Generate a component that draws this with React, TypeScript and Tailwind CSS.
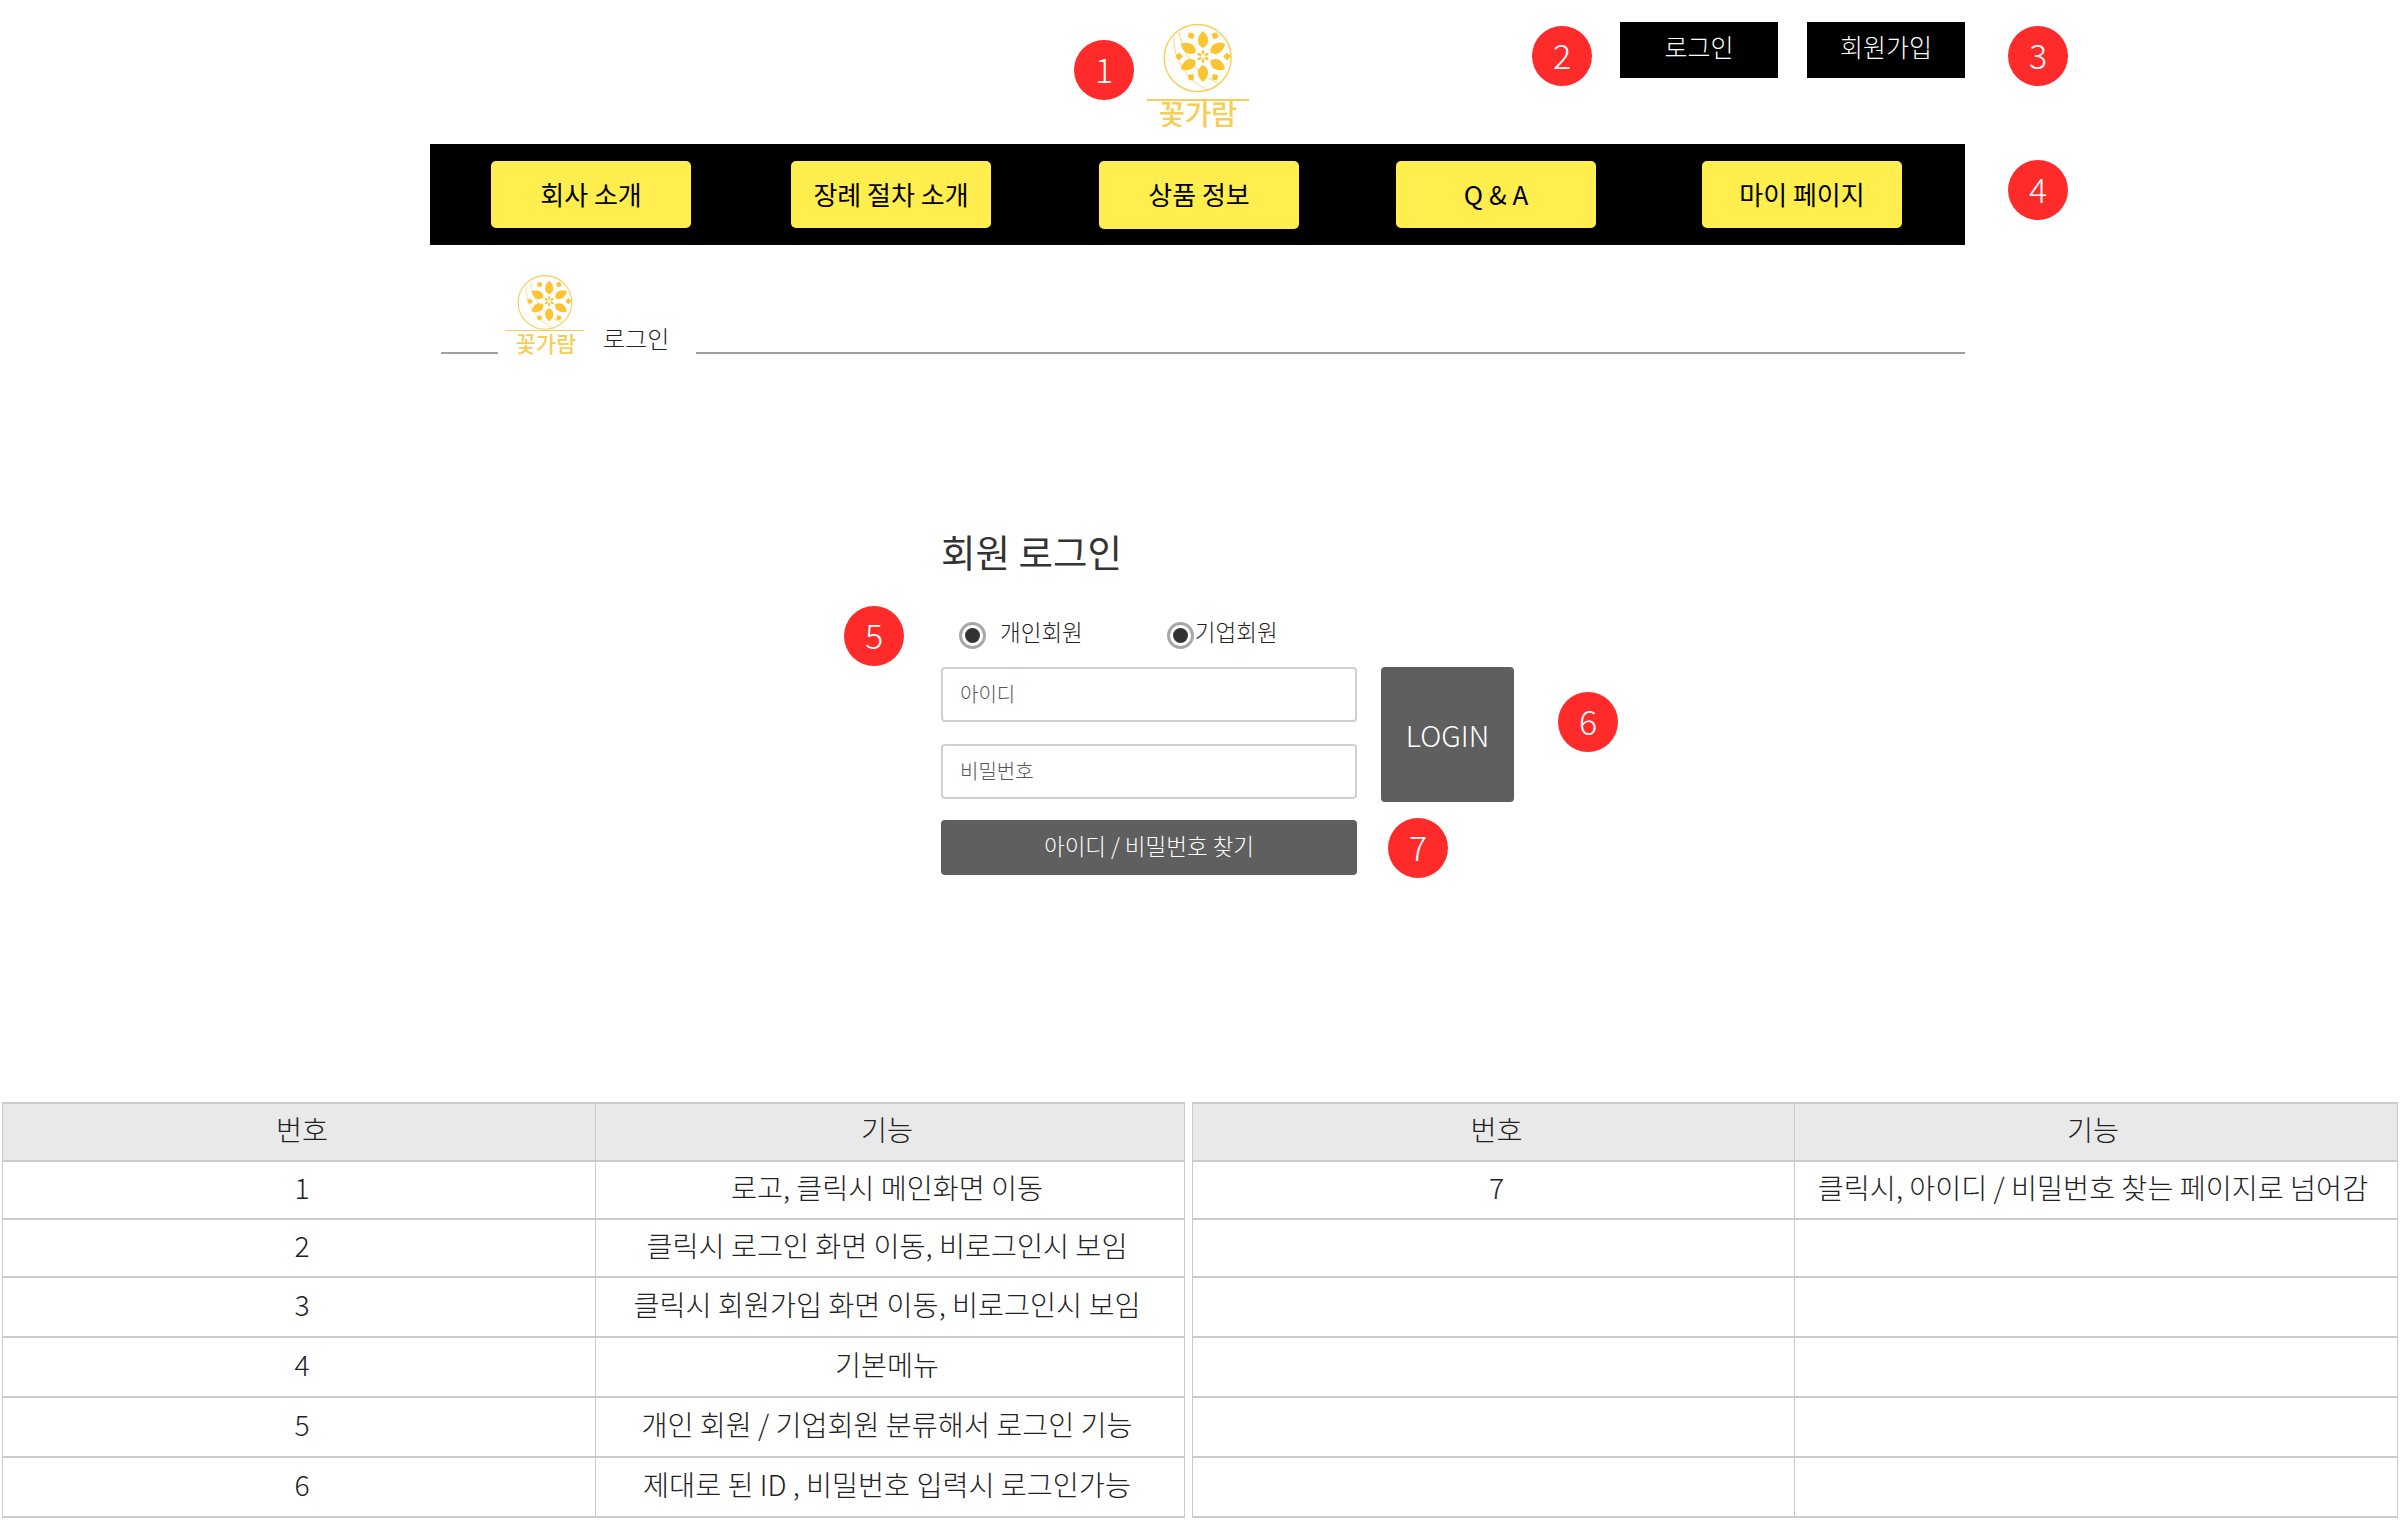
const menus = [
  { label: '회사 소개', className: 'ml-[61px] h-[67px]' },
  { label: '장례 절차 소개', className: 'ml-[100px] h-[67px]' },
  { label: '상품 정보', className: 'ml-[108px] h-[68px] mt-px' },
  { label: 'Q & A', className: 'ml-[97px] h-[67px]' },
  { label: '마이 페이지', className: 'ml-[106px] h-[67px]' },
];

const badges = [
  { n: 1, className: 'left-[1074px] top-[40px]' },
  { n: 2, className: 'left-[1532px] top-[26px]' },
  { n: 3, className: 'left-[2008px] top-[26px]' },
  { n: 4, className: 'left-[2008px] top-[160px]' },
  { n: 5, className: 'left-[844px] top-[606px]' },
  { n: 6, className: 'left-[1558px] top-[692px]' },
  { n: 7, className: 'left-[1388px] top-[818px]' },
];

const rowHeights = ['h-[58px]', 'h-[58px]', 'h-[58px]', 'h-[60px]', 'h-[60px]', 'h-[60px]', 'h-[60px]'];

const leftRows = [
  ['번호', '기능'],
  ['1', '로고, 클릭시 메인화면 이동'],
  ['2', '클릭시 로그인 화면 이동, 비로그인시 보임'],
  ['3', '클릭시 회원가입 화면 이동, 비로그인시 보임'],
  ['4', '기본메뉴'],
  ['5', '개인 회원 / 기업회원 분류해서 로그인 기능'],
  ['6', '제대로 된 ID , 비밀번호 입력시 로그인가능'],
];

const rightRows = [
  ['번호', '기능'],
  ['7', '클릭시, 아이디 / 비밀번호 찾는 페이지로 넘어감'],
  ['', ''],
  ['', ''],
  ['', ''],
  ['', ''],
  ['', ''],
];

function LogoMark({ className }: { className: string }) {
  const petals = [0, 60, 120, 180, 240, 300];
  return (
    <svg viewBox="0 0 90 80" className={className} fill="none">
      <circle cx="43.7" cy="43" r="33.5" stroke="#f5cf55" strokeWidth="1.4" />
      <path d="M20 22C19 46 34 66 54 75" stroke="#f5cf55" strokeWidth="0.8" />
      <path d="M25 17C29 42 44 60 66 69" stroke="#f5cf55" strokeWidth="0.8" />
      <g transform="translate(49 41.5)">
        {petals.map(a => (
          <g key={a} transform={`rotate(${a})`}>
            <path d="M0 -8.5C-7 -12 -6.5 -20 0 -25.5C6.5 -20 7 -12 0 -8.5Z" fill="#fbc531" />
            <ellipse cx="0" cy="-4.2" rx="1.4" ry="2.3" fill="#fbc531" />
            <g transform="rotate(30)">
              <rect x="-2.8" y="-26.8" width="5.6" height="5.6" rx="1" fill="#fbc531" transform="rotate(45 0 -24)" />
            </g>
          </g>
        ))}
      </g>
    </svg>
  );
}

function Radio({ className }: { className: string }) {
  return (
    <span className={`flex h-[27px] w-[27px] items-center justify-center rounded-full border-[3px] border-[#a8a8a8] bg-white ${className}`}>
      <span className="h-[15px] w-[15px] rounded-full bg-[#333333]" />
    </span>
  );
}

function SpecTable({ rows, className, firstCol }: { rows: string[][]; className: string; firstCol: string }) {
  return (
    <table className={`table-fixed border-collapse text-[28.3px] font-light text-[#222222] ${className}`}>
      <colgroup>
        <col className={firstCol} />
        <col />
      </colgroup>
      <tbody>
        {rows.map((row, i) => (
          <tr key={i} className={`${rowHeights[i]} ${i === 0 ? 'bg-[#e9e9e9]' : 'bg-white'}`}>
            <td className="whitespace-nowrap border-x border-y-2 border-[#cccccc] p-0 pb-[6px] pl-[6px] text-center align-middle">
              {row[0]}
            </td>
            <td className="whitespace-nowrap border-x border-y-2 border-[#cccccc] p-0 pb-[6px] pr-[6px] text-center align-middle">
              {row[1]}
            </td>
          </tr>
        ))}
      </tbody>
    </table>
  );
}

export default function App() {
  return (
    <div className="relative h-[1520px] w-[2400px] overflow-hidden bg-white font-['Noto_Sans_CJK_KR','Noto_Sans',sans-serif]">
      {/* Header */}
      <div className="ml-[430px] flex h-[144px] w-[1535px] items-start">
        <div className="ml-[717px] flex w-[102px] flex-col items-center pt-[15px]">
          <LogoMark className="ml-[2px] h-[80px] w-[90px]" />
          <div className="mt-[4px] h-[2px] w-full bg-[#f5cf55]" />
          <span className="-mt-[3px] text-[28.5px] font-medium leading-[30px] text-[#f5cf55]">꽃가람</span>
        </div>
        <div className="ml-auto flex gap-[29px] pt-[22px]">
          <button className="h-[56px] w-[158px] bg-black pb-[6px] text-[25px] font-light text-white">로그인</button>
          <button className="h-[56px] w-[158px] bg-black pb-[6px] text-[25px] font-light text-white">회원가입</button>
        </div>
      </div>

      {/* Menu bar */}
      <div className="ml-[430px] flex h-[101px] w-[1535px] items-center bg-black">
        {menus.map(m => (
          <button key={m.label} className={`w-[200px] rounded-[5px] bg-[#ffee4d] pb-[3px] text-[26px] text-black ${m.className}`}>
            {m.label}
          </button>
        ))}
      </div>

      {/* Breadcrumb */}
      <div className="ml-[441px] mt-[21px] flex h-[88px] w-[1524px] items-end">
        <div className="h-[2px] w-[57px] bg-[#a0a0a0]" />
        <div className="ml-[7px] flex w-[79px] flex-col items-center">
          <LogoMark className="ml-[3px] h-[64px] w-[72px] translate-y-[2px]" />
          <div className="h-px w-full bg-[#f5cf55]" />
          <span className="pl-[3px] text-[22px] font-medium leading-[23px] text-[#f5cf55]">꽃가람</span>
        </div>
        <span className="ml-[19px] pb-[2px] text-[24px] font-light leading-[28px] text-[#222222]">로그인</span>
        <div className="ml-[27px] h-[2px] flex-1 bg-[#a0a0a0]" />
      </div>

      {/* Login form */}
      <div className="ml-[941px] mt-[172px] w-[573px]">
        <h1 className="text-[37.5px] font-normal leading-[50px] text-[#333333]">회원 로그인</h1>
        <div className="mt-[45px] flex h-[28px] items-center text-[22.5px] font-light text-[#222222]">
          <Radio className="ml-[18px]" />
          <span className="ml-[14px] pb-[6px]">개인회원</span>
          <Radio className="ml-[84px]" />
          <span className="ml-px pb-[6px]">기업회원</span>
        </div>
        <div className="mt-[18px] flex items-start gap-[24px]">
          <div className="flex w-[416px] flex-col">
            <input
              placeholder="아이디"
              className="h-[55px] rounded-[4px] border-2 border-[#d0d0d0] bg-white px-[17px] pb-[2px] text-[20px] font-light placeholder:text-[#555555]"
            />
            <input
              placeholder="비밀번호"
              className="mt-[22px] h-[55px] rounded-[4px] border-2 border-[#d0d0d0] bg-white px-[17px] pb-[2px] text-[20px] font-light placeholder:text-[#555555]"
            />
            <button className="mt-[21px] h-[55px] rounded-[4px] bg-[#5f5f5f] pb-[3px] text-[22.5px] font-light text-white">
              아이디 / 비밀번호 찾기
            </button>
          </div>
          <button className="h-[135px] w-[133px] rounded-[4px] bg-[#5f5f5f] text-[29px] font-light text-white">LOGIN</button>
        </div>
      </div>

      {/* Function tables */}
      <div className="ml-[2px] mt-[227px] flex gap-[7px]">
        <SpecTable rows={leftRows} className="w-[1183px]" firstCol="w-[593px]" />
        <SpecTable rows={rightRows} className="w-[1206px]" firstCol="w-[602px]" />
      </div>

      {/* Annotation badges */}
      {badges.map(b => (
        <div
          key={b.n}
          className={`absolute flex h-[60px] w-[60px] items-center justify-center rounded-full bg-[#ff2a2a] pb-[3px] text-[34px] font-light text-white ${b.className}`}
        >
          {b.n}
        </div>
      ))}
    </div>
  );
}
